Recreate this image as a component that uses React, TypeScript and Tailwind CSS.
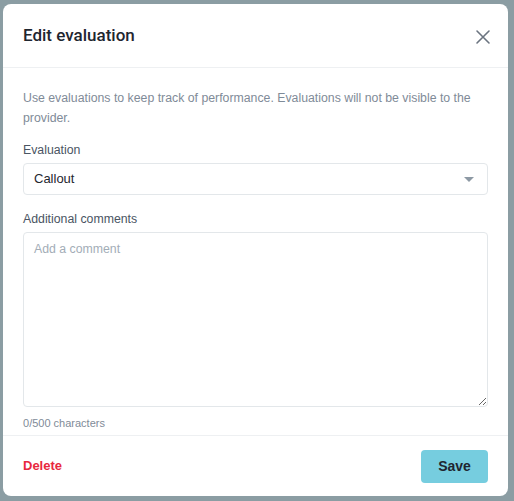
import { useState } from "react";

function CloseIcon() {
  return (
    <svg width="16" height="16" viewBox="0 0 16 16" fill="none" stroke="currentColor" strokeWidth="1.6" strokeLinecap="round">
      <path d="M2 2l12 12M14 2L2 14" />
    </svg>
  );
}

export default function App() {
  const [comment, setComment] = useState("");
  const [evaluation, setEvaluation] = useState("Callout");

  return (
    <div
      className="min-h-screen w-full bg-[#8b9da3] pt-[4px] pl-[3px]"
      style={{ fontFamily: "'Liberation Sans', Arial, sans-serif" }}
    >
      <div className="flex h-[492px] w-[505px] flex-col rounded-[8px] bg-white">
        <div className="flex h-[64px] items-center justify-between border-b border-[#eef0f2] px-5">
          <h2
            className="text-[17px] font-medium text-[#1f2630]"
            style={{ fontFamily: "Roboto, 'Liberation Sans', sans-serif" }}
          >
            Edit evaluation
          </h2>
          <button className="-mr-[3px] mt-[3px] text-[#6b7480]">
            <CloseIcon />
          </button>
        </div>

        <div className="flex flex-1 flex-col px-5 pt-[20px]">
          <p className="text-[12.3px] leading-[20px] text-[#7f8b98]">
            Use evaluations to keep track of performance. Evaluations will not be visible to the provider.
          </p>

          <label className="mt-[13px] text-[12.3px] leading-[19px] text-[#4a5563]">Evaluation</label>
          <div className="relative mt-[3px]">
            <select
              value={evaluation}
              onChange={(e) => setEvaluation(e.target.value)}
              className="h-[32px] w-full appearance-none rounded-[4px] border border-[#e3e7ea] bg-white px-[10px] text-[13px] text-[#1f2630] outline-none"
            >
              <option>Callout</option>
              <option>Commendation</option>
              <option>Concern</option>
            </select>
            <span className="pointer-events-none absolute right-[14px] top-[14px] h-0 w-0 border-x-[5px] border-t-[5px] border-x-transparent border-t-[#8d99a4]" />
          </div>

          <label className="mt-[15px] text-[12.3px] leading-[19px] text-[#4a5563]">Additional comments</label>
          <textarea
            value={comment}
            maxLength={500}
            onChange={(e) => setComment(e.target.value)}
            placeholder="Add a comment"
            className="mt-[3px] h-[175px] w-full rounded-[4px] border border-[#e3e7ea] px-[10px] py-[7px] text-[12.3px] text-[#1f2630] outline-none placeholder:text-[#a3adb7]"
          />
          <p className="mt-[8px] text-[11px] leading-[16px] text-[#7f8b98]">{comment.length}/500 characters</p>
        </div>

        <div className="flex h-[61px] items-center justify-between border-t border-[#eef0f2] px-5">
          <button className="text-[13px] font-bold text-[#e8283e]">Delete</button>
          <button className="h-[33px] w-[67px] rounded-[4px] bg-[#76cddf] text-[14px] font-bold text-[#1f2630]">
            Save
          </button>
        </div>
      </div>
    </div>
  );
}
